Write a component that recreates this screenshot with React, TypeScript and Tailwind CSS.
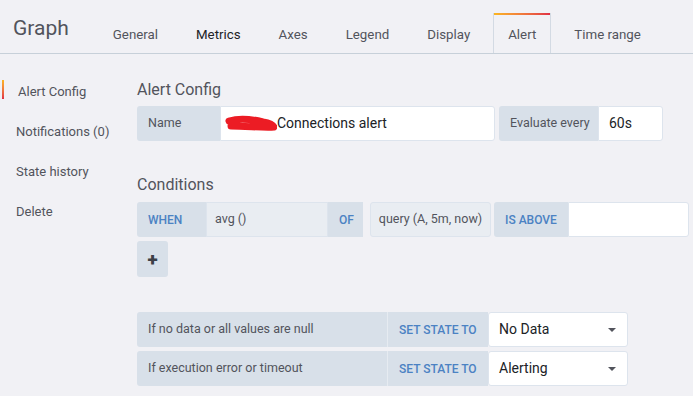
import React from "react";

const tabs = ["General", "Metrics", "Axes", "Legend", "Display", "Alert", "Time range"];
const sideItems = ["Alert Config", "Notifications (0)", "State history", "Delete"];

const label =
  "flex h-[35px] items-center whitespace-nowrap bg-[#d8e0e9] px-[11px] text-[12.5px] text-[#52545c]";
const keyword =
  "flex h-[35px] items-center whitespace-nowrap bg-[#d8e0e9] px-[11px] text-[12px] font-medium text-[#4b82c3]";

function Caret() {
  return (
    <svg width="10" height="6" viewBox="0 0 10 6" className="text-[#52545c]">
      <path d="M1 1 L5 5 L9 1 Z" fill="currentColor" />
    </svg>
  );
}

export default function App() {
  return (
    <div
      className="h-[396px] w-[693px] overflow-hidden bg-[#f1f1f5] text-[#52545c]"
      style={{ fontFamily: "Roboto, 'Liberation Sans', sans-serif" }}
    >
      {/* Header */}
      <div className="flex h-[54px] items-end border-b border-[#c7d0d9] bg-[#f1f1f5] pl-[13px]">
        <div className="mb-[9px] mr-[29px] text-[21px] text-[#52545c]">Graph</div>
        <div className="flex gap-2">
          {tabs.map((t) =>
            t === "Alert" ? (
              <div
                key={t}
                className="relative -mb-px flex h-[40px] items-center whitespace-nowrap border-x border-[#d3dae3] bg-[#f1f1f5] px-[14px] pt-[3px] text-[13.3px] text-[#52545c]"
              >
                <div className="absolute left-0 right-0 top-0 h-[2px] bg-gradient-to-r from-[#fbb51f] to-[#e02f44]" />
                {t}
              </div>
            ) : (
              <div
                key={t}
                className={`flex h-[40px] items-center whitespace-nowrap px-[15px] pt-[3px] text-[13.3px] ${
                  t === "Metrics" ? "text-[#202226]" : "text-[#52545c]"
                }`}
              >
                {t}
              </div>
            )
          )}
        </div>
      </div>

      <div className="flex">
        {/* Sidebar */}
        <div className="w-[137px] pt-[28px]">
          {sideItems.map((s, i) => (
            <div key={s} className="relative flex h-[40px] items-start pl-[16px] text-[13px] text-[#52545c]">
              {i === 0 && (
                <div className="absolute left-[2px] top-[-2px] h-[19px] w-[2px] bg-gradient-to-b from-[#fbb51f] to-[#e02f44]" />
              )}
              <span className={i === 0 ? "pl-[2px]" : ""}>{s}</span>
            </div>
          ))}
        </div>

        {/* Content */}
        <div className="flex-1 pt-[26px]">
          <div className="mb-[6px] text-[16px] leading-[20px] text-[#52545c]">Alert Config</div>

          <div className="flex">
            <div className={`${label} w-[83px] rounded-l-[3px]`}>Name</div>
            <div className="flex h-[35px] w-[275px] items-center whitespace-nowrap rounded-r-[3px] border border-[#dde4ed] bg-white pl-[4px] text-[14px] text-[#202226]">
              <svg width="52" height="18" viewBox="0 0 52 18">
                <path
                  d="M4 6 C14 3 26 4 38 7 C44 8 48 10 49 12 C40 13 22 11 6 11"
                  fill="none"
                  stroke="#ec1c24"
                  strokeWidth="7"
                  strokeLinecap="round"
                  strokeLinejoin="round"
                />
              </svg>
              Connections alert
            </div>
            <div className={`${label} ml-[4px] w-[99px] rounded-l-[3px]`}>Evaluate every</div>
            <div className="flex h-[35px] w-[65px] items-center rounded-r-[3px] border border-[#dde4ed] bg-white pl-[10px] text-[14px] text-[#202226]">
              60s
            </div>
          </div>

          <div className="mb-[7px] mt-[34px] text-[16px] leading-[20px] text-[#52545c]">Conditions</div>

          <div className="flex">
            <div className={`${keyword} w-[69px] rounded-l-[3px]`}>WHEN</div>
            <div className="flex h-[35px] w-[122px] items-center border border-[#dde4ed] bg-[#e9edf2] pl-[8px] text-[12.5px] text-[#52545c]">
              avg ()
            </div>
            <div className={`${keyword} w-[35px]`}>OF</div>
            <div className="ml-[7px] flex h-[35px] w-[121px] items-center justify-center whitespace-nowrap rounded-[3px] border border-[#dde4ed] bg-[#e9edf2] text-[12.5px] text-[#52545c]">
              query (A, 5m, now)
            </div>
            <div className={`${keyword} ml-[3px] w-[74px] rounded-l-[3px]`}>IS ABOVE</div>
            <div className="h-[35px] w-[121px] rounded-r-[3px] border border-[#dde4ed] bg-white" />
          </div>

          <div className="mt-[4px] flex h-[36px] w-[31px] items-center justify-center rounded-[3px] bg-[#d8e0e9] text-[19px] font-black leading-none text-[#3d4047]">
            +
          </div>

          <div className="mt-[35px] flex flex-col gap-[4px]">
            {[
              ["If no data or all values are null", "No Data"],
              ["If execution error or timeout", "Alerting"],
            ].map(([l, v]) => (
              <div key={l} className="flex">
                <div className={`${label} w-[251px] rounded-l-[3px] border-r border-[#e6ebf1]`}>{l}</div>
                <div className={`${keyword} w-[100px] px-[9px]`}>SET STATE TO</div>
                <div className="flex h-[35px] w-[140px] items-center justify-between rounded-[3px] border border-[#dde4ed] bg-white pl-[10px] pr-[10px] text-[14px] text-[#202226]">
                  {v}
                  <Caret />
                </div>
              </div>
            ))}
          </div>
        </div>
      </div>
    </div>
  );
}
